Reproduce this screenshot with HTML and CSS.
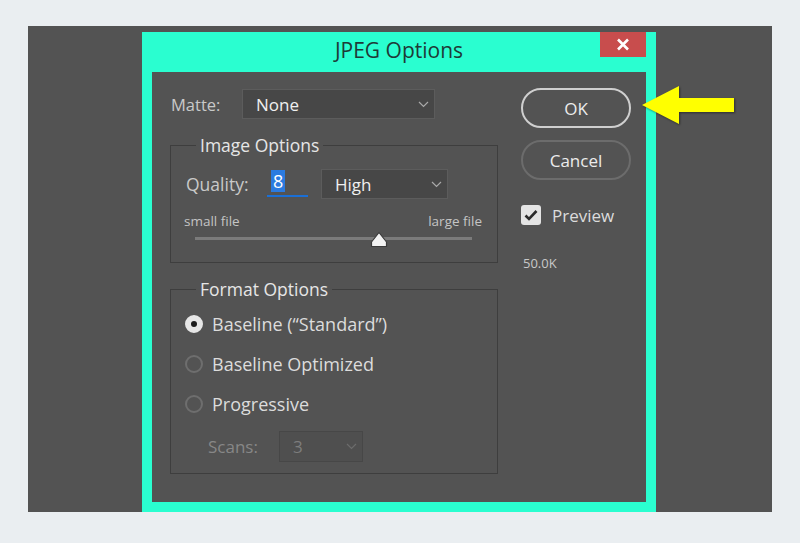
FILE: index.html
```html
<!doctype html>
<html>
<head>
<meta charset="utf-8">
<title>JPEG Options</title>
<link rel="stylesheet" href="styles.css">
</head>
<body>
<div class="stage">
	<div class="dialog">
		<div class="titlebar">
			<span class="title">JPEG Options</span>
			<a class="close" href="javascript:void(0);">
				<svg width="14" height="13" viewBox="0 0 14 13"><path d="M2 1.5L12 11.5M12 1.5L2 11.5" stroke="#fff" stroke-width="2.6" fill="none"/></svg>
			</a>
		</div>
		<div class="panel">
			<div class="left">
				<div class="row matte">
					<label class="lbl">Matte:</label>
					<div class="select matte-sel">
						<span>None</span>
						<svg class="chev" width="11" height="7" viewBox="0 0 11 7"><path d="M1 1L5.5 5.5L10 1" stroke="#a9a9a9" stroke-width="1.2" fill="none"/></svg>
					</div>
				</div>

				<fieldset class="group image-opts">
					<legend>Image Options</legend>
					<div class="row quality">
						<label class="lbl">Quality:</label>
						<div class="qinput"><span class="hl">8</span></div>
						<div class="select q-sel">
							<span>High</span>
							<svg class="chev" width="11" height="7" viewBox="0 0 11 7"><path d="M1 1L5.5 5.5L10 1" stroke="#a9a9a9" stroke-width="1.2" fill="none"/></svg>
						</div>
					</div>
					<div class="scale"><span>small file</span><span>large file</span></div>
					<div class="slider">
						<div class="track"></div>
						<svg class="thumb" width="18" height="17" viewBox="0 0 18 17"><path d="M9 1.5L16.5 11V15.5H1.5V11Z" fill="#f2f2f2" stroke="#3a3a3a" stroke-width="1.2" stroke-linejoin="round"/></svg>
					</div>
				</fieldset>

				<fieldset class="group format-opts">
					<legend>Format Options</legend>
					<div class="radio on"><i></i>Baseline (“Standard”)</div>
					<div class="radio"><i></i>Baseline Optimized</div>
					<div class="radio"><i></i>Progressive</div>
					<div class="row scans">
						<label class="lbl">Scans:</label>
						<div class="select s-sel">
							<span>3</span>
							<svg class="chev" width="11" height="7" viewBox="0 0 11 7"><path d="M1 1L5.5 5.5L10 1" stroke="#6c6c6c" stroke-width="1.2" fill="none"/></svg>
						</div>
					</div>
				</fieldset>
			</div>

			<div class="right">
				<button class="btn ok">OK</button>
				<button class="btn cancel">Cancel</button>
				<div class="check">
					<i><svg width="14" height="12" viewBox="0 0 14 12"><path d="M1.5 6.5L5 10L12.5 2" stroke="#2b2b2b" stroke-width="2.6" fill="none"/></svg></i>
					Preview
				</div>
				<div class="size">50.0K</div>
			</div>
		</div>
	</div>

	<svg class="arrow" width="95" height="40" viewBox="0 0 95 40"><path d="M1 20L38 1V13H93V27H38V39Z" fill="#ffff00"/></svg>
</div>
</body>
</html>
```

FILE: styles.css
```css
body{ margin:0; background:#eaeef1; font-family:"Open Sans","Liberation Sans",sans-serif; }
.stage{ position:relative; width:744px; height:486px; margin:26px 0 0 28px; padding:6px 0 0 114px; box-sizing:border-box; background:#535353; overflow:hidden; }

.dialog{ width:514px; height:480px; background:#2afed0; }
.titlebar{ display:grid; grid-template-columns:1fr auto 1fr; height:40px; }
.title{ grid-column:2; font-size:21px; line-height:36px; color:#1e3a37; }
.close{ grid-column:3; justify-self:end; margin-right:10px; width:46px; height:25px; background:#c84d4d; display:flex; align-items:center; justify-content:center; }

.panel{ display:flex; height:430px; margin:0 10px; padding:16px 0 0 18px; box-sizing:border-box; background:#535353; color:#dcdcdc; font-size:17px; }
.left{ width:328px; }
.right{ width:110px; margin-left:23px; }

.row{ display:flex; align-items:center; }
.lbl{ color:#c9c9c9; }
.matte{ height:30px; margin-top:1px; padding-left:1px; }
.matte .lbl{ width:71px; font-size:16.5px; }

.select{ display:flex; align-items:center; justify-content:space-between; height:30px; padding:0 5px 0 13px; box-sizing:border-box; background:#474747; border:1px solid #5c5c5c; color:#f0f0f0; }
.matte-sel{ width:193px; }
.q-sel{ width:127px; margin-left:13px; }

.group{ margin:15px 0 0 0; padding:0; border:1px solid #3e3e3e; min-width:0; }
.group legend{ margin-left:25px; padding:0 4px; line-height:22px; font-size:17.5px; color:#e6e6e6; }

.quality{ height:30px; margin-top:13px; padding-left:15px; }
.quality .lbl{ width:81px; font-size:17.5px; }
.qinput{ align-self:flex-start; width:41px; height:28px; padding:1px 0 0 4px; box-sizing:border-box; border-bottom:2px solid #1a6fd6; }
.qinput .hl{ display:inline-block; height:22px; line-height:22px; padding:0 2px; background:#2b7be0; color:#fff; font-size:18px; }

.scale{ display:flex; justify-content:space-between; height:16px; margin-top:14px; padding:0 15px 0 13px; font-size:13.5px; line-height:16px; color:#c4c4c4; }
.slider{ position:relative; height:18px; margin:1px 25px 0 24px; }
.track{ position:relative; top:7px; height:3px; background:#7b7b7b; }
.thumb{ position:absolute; left:66.5%; top:1px; margin-left:-9px; }
.image-opts{ padding-bottom:14px; }

.radio{ display:flex; align-items:center; height:24px; margin-top:16px; padding-left:14px; font-size:18px; }
.format-opts legend + .radio{ margin-top:12px; }
.radio i{ width:18px; height:18px; margin-right:9px; box-sizing:border-box; border:2px solid #6e6e6e; border-radius:50%; }
.radio.on i{ border:6px solid #e6e6e6; background:#1c1c1c; }

.scans{ height:31px; margin-top:15px; padding-left:37px; }
.scans .lbl{ width:71px; color:#878787; }
.s-sel{ width:84px; height:31px; background:#4f4f4f; border-color:#474747; color:#7d7d7d; }
.format-opts{ padding-bottom:11px; }

.btn{ display:block; width:110px; height:40px; padding:0; background:transparent; border-radius:20px; font-family:inherit; font-size:17px; color:#ececec; }
.ok{ border:2px solid #cfcfcf; }
.cancel{ margin-top:12px; border:2px solid #6c6c6c; }
.check{ display:flex; align-items:center; height:20px; margin-top:25px; }
.check i{ display:flex; align-items:center; justify-content:center; width:20px; height:20px; margin-right:11px; background:#e4e4e4; border-radius:3px; }
.size{ margin:31px 0 0 2px; font-size:13px; line-height:14px; color:#c8c8c8; }

.arrow{ position:absolute; left:613px; top:59px; filter:drop-shadow(1px 1px 1px rgba(0,0,0,.45)); }
```
